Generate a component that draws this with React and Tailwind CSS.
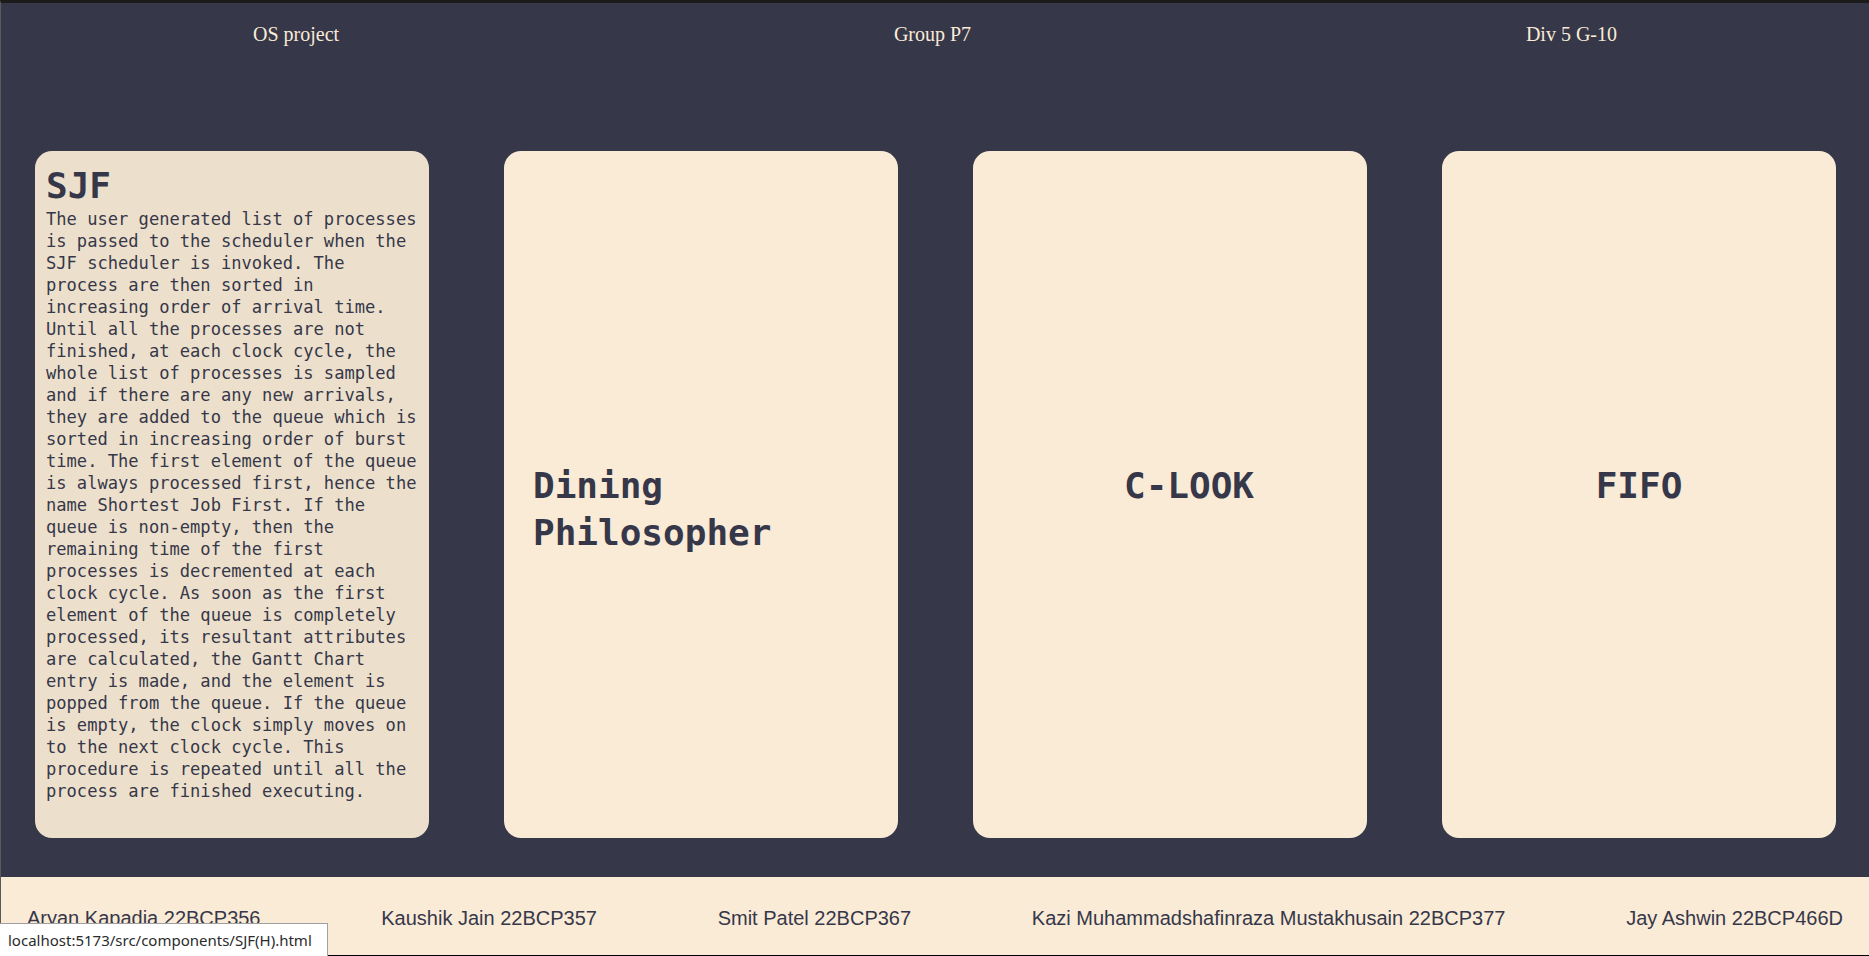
const sjfText =
    'The user generated list of processes is passed to the scheduler when the SJF scheduler is invoked. The process are then sorted in increasing order of arrival time. Until all the processes are not finished, at each clock cycle, the whole list of processes is sampled and if there are any new arrivals, they are added to the queue which is sorted in increasing order of burst time. The first element of the queue is always processed first, hence the name Shortest Job First. If the queue is non-empty, then the remaining time of the first processes is decremented at each clock cycle. As soon as the first element of the queue is completely processed, its resultant attributes are calculated, the Gantt Chart entry is made, and the element is popped from the queue. If the queue is empty, the clock simply moves on to the next clock cycle. This procedure is repeated until all the process are finished executing.';

const members = [
    'Aryan Kapadia 22BCP356',
    'Kaushik Jain 22BCP357',
    'Smit Patel 22BCP367',
    'Kazi Muhammadshafinraza Mustakhusain 22BCP377',
    'Jay Ashwin 22BCP466D',
];

function TitleCard({ title, shift = '' }) {
    return (
        <div className="w-[394px] shrink-0 h-[687px] rounded-[17px] bg-[#faebd7] px-[29px] pt-[311px] flex justify-center items-start">
            <h1 className={`text-[36px] leading-[47px] font-bold text-[#363749] font-['DejaVu_Sans_Mono','Liberation_Mono',monospace] ${shift}`}>
                {title}
            </h1>
        </div>
    );
}

export default function App() {
    return (
        <div className="min-h-screen bg-[#363749] border-t-[3px] border-t-[#1b1b1b] border-l border-l-[#5a5a5a]">
            <header className="flex justify-between px-[252px] pt-[20px] text-[20px] leading-[22px] text-[#faebd7] font-['Liberation_Serif',serif]">
                <span>OS project</span>
                <span>Group P7</span>
                <span>Div 5 G-10</span>
            </header>

            <main className="flex gap-[75px] px-[34px] pt-[106px] pb-[39px]">
                <div className="w-[394px] shrink-0 h-[687px] rounded-[17px] bg-[#ece0cc] px-[11px] pt-[11px] text-[#363749] font-['DejaVu_Sans_Mono','Liberation_Mono',monospace]">
                    <h1 className="text-[36px] leading-[47px] font-bold">SJF</h1>
                    <p className="text-[17.1px] leading-[22px] -mt-px">{sjfText}</p>
                </div>
                <TitleCard title="Dining Philosopher" />
                <TitleCard title="C-LOOK" shift="ml-[38px]" />
                <TitleCard title="FIFO" />
            </main>

            <footer className="flex justify-between bg-[#faebd7] px-[26px] pt-[30px] pb-[30px] text-[20px] leading-[23px] text-[#363749] font-['Liberation_Sans',Arial,sans-serif]">
                {members.map((m) => (
                    <span key={m}>{m}</span>
                ))}
            </footer>

            {/* browser status bubble + window edge */}
            <div className="fixed bottom-0 left-0 right-0 h-px bg-black" />
            <div className="fixed bottom-0 left-0 h-[33px] w-[328px] bg-white border-t border-r border-[#a0a0a0] pl-[8px] flex items-center text-[15px] text-[#2b2b2b] font-['Noto_Sans',sans-serif]">
                localhost:5173/src/components/SJF(H).html
            </div>
        </div>
    );
}
